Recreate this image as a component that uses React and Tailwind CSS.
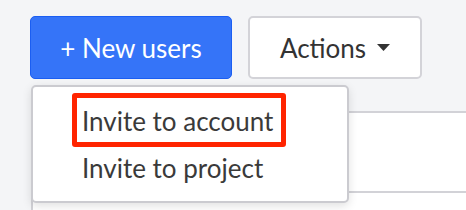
export default function App() {
  return (
    <div
      className="relative h-[210px] w-[466px] overflow-hidden bg-[#f4f5f7] pl-[30px] pt-[16px]"
      style={{ fontFamily: 'Lato, "Open Sans", sans-serif' }}
    >
      {/* toolbar */}
      <div className="flex gap-[16px]">
        <button className="flex h-[63px] w-[202px] items-center justify-center rounded-[5px] border border-[#1b5ef2] bg-[#3574f8] text-[26px] leading-[30px] text-white">
          + New users
        </button>
        <button className="flex h-[63px] w-[174px] items-center justify-center gap-[11px] rounded-[5px] border-2 border-[#d3d3d8] bg-white text-[26px] leading-[30px] text-[#333]">
          Actions
          <svg width="13" height="7" viewBox="0 0 13 7">
            <path d="M0 0h13L6.5 7z" fill="#333" />
          </svg>
        </button>
      </div>

      {/* table behind the menu */}
      <div className="ml-[1px] mt-[32px] h-[200px] border-l-2 border-t-2 border-[#d2d2d7] bg-white">
        <div className="h-[80px] border-b-2 border-[#d2d2d7]" />
      </div>

      {/* dropdown */}
      <div className="absolute left-[31px] top-[85px] h-[118px] w-[318px] rounded-[5px] border-2 border-[#cbcbd0] bg-white pt-[10px] shadow-[0_3px_10px_rgba(0,0,0,0.12)]">
        <div className="flex h-[47px] items-center pl-[49px] text-[26px] leading-[30px] text-[#3a3a3a]">
          Invite to account
        </div>
        <div className="flex h-[47px] items-center pl-[49px] text-[26px] leading-[30px] text-[#3a3a3a]">
          Invite to project
        </div>
      </div>

      {/* highlight annotation */}
      <div className="absolute left-[72px] top-[93px] h-[54px] w-[214px] rounded-[3px] border-[5px] border-[#ff2400]" />
    </div>
  );
}
